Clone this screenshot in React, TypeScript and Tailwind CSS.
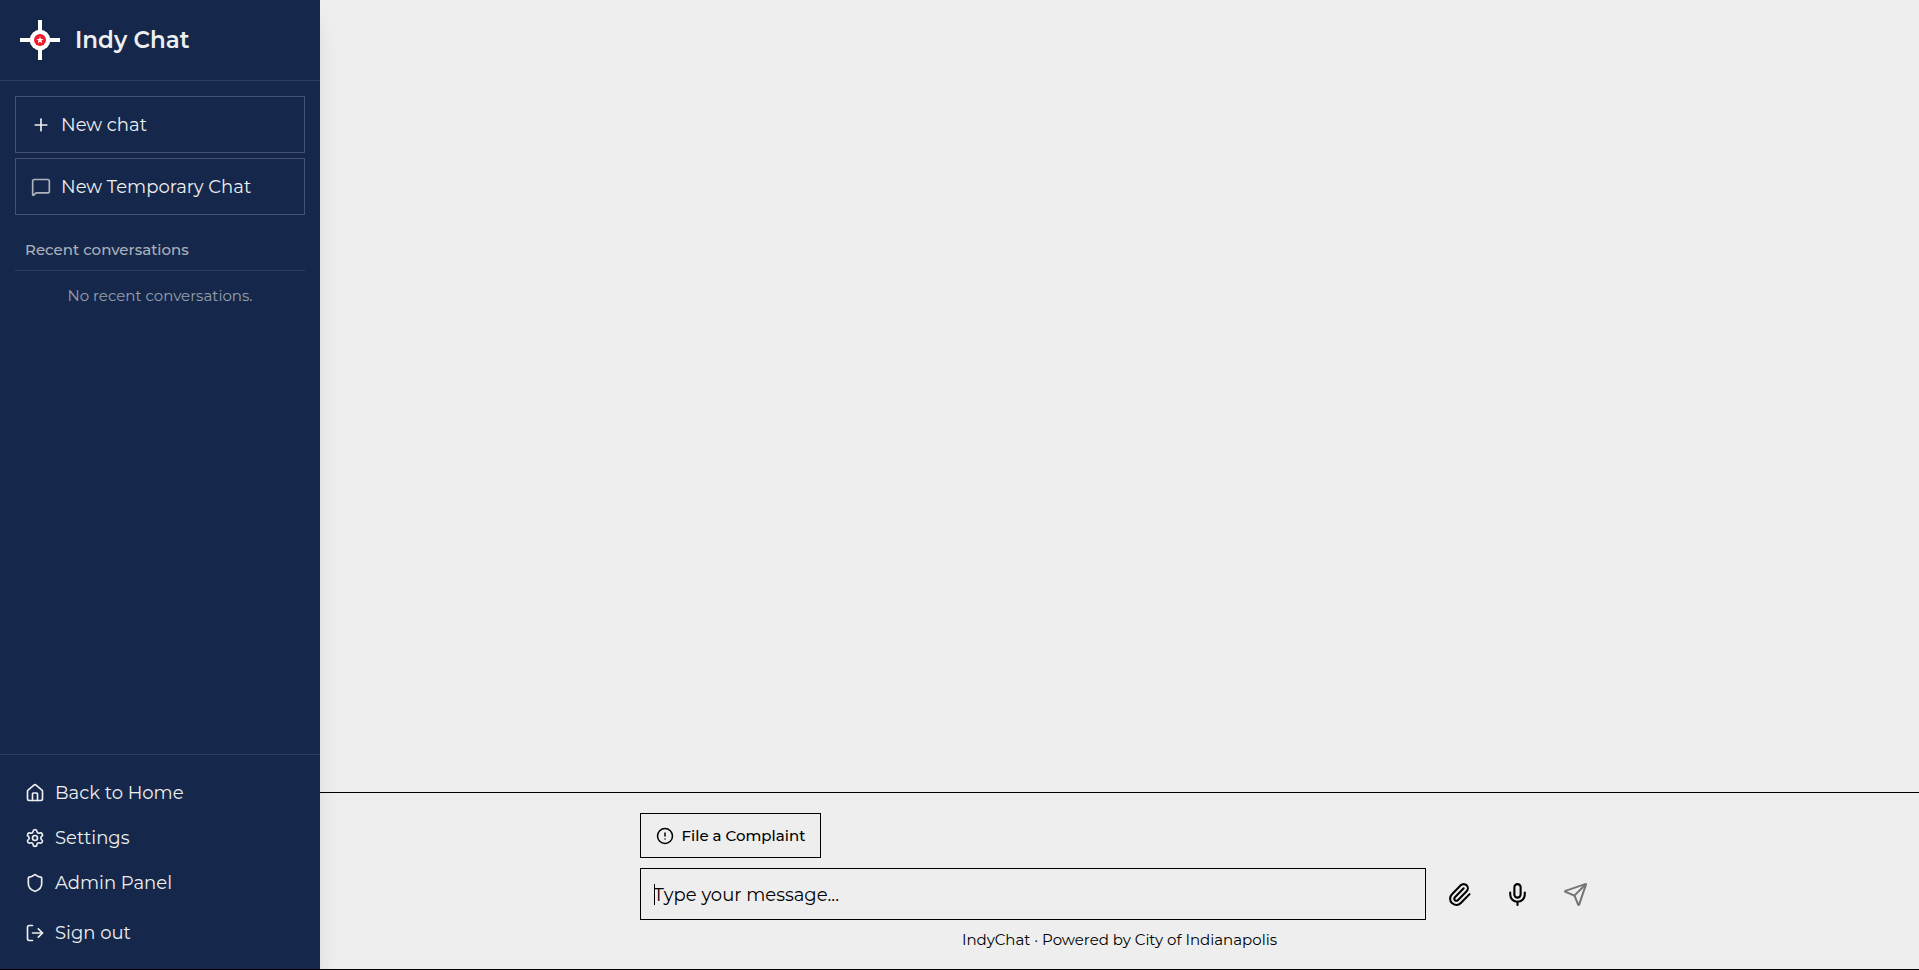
import { useState } from "react";
import {
  CircleAlert,
  House,
  LogOut,
  MessageSquare,
  Mic,
  Paperclip,
  Plus,
  Send,
  Settings,
  Shield,
} from "lucide-react";

const navItems = [
  { key: "home", label: "Back to Home", icon: House },
  { key: "settings", label: "Settings", icon: Settings },
  { key: "admin", label: "Admin Panel", icon: Shield },
];

function Logo() {
  return (
    <svg viewBox="0 0 40 40" className="h-10 w-10 shrink-0" aria-hidden="true">
      <path d="M18 0h4v40h-4z M0 18h40v4H0z" fill="#fff" />
      <circle cx="20" cy="20" r="10.3" fill="#fff" />
      <circle cx="20" cy="20" r="6" fill="#ee1c2e" />
      <path
        d="M20 16.4l.9 2.5 2.6.1-2 1.6.7 2.6-2.2-1.5-2.2 1.5.7-2.6-2-1.6 2.6-.1z"
        fill="#fff"
      />
    </svg>
  );
}

function Sidebar() {
  return (
    <aside className="flex w-80 shrink-0 flex-col bg-[#15284b] text-[#eeeeee] shadow-xl">
      <div className="flex items-center gap-[15px] border-b border-white/10 p-5">
        <Logo />
        <h1 className="text-[23px] leading-10 font-semibold">Indy Chat</h1>
      </div>

      <div className="flex flex-1 flex-col px-[15px] pt-[15px]">
        <div className="flex flex-col gap-[5px]">
          <button className="flex h-[57px] items-center gap-[10px] border border-white/20 px-[15px] text-[18px] leading-7">
            <Plus className="h-5 w-5" />
            <span>New chat</span>
          </button>
          <button className="flex h-[57px] items-center gap-[10px] border border-white/20 px-[15px] text-[18px] leading-7">
            <MessageSquare className="h-5 w-5 opacity-70" />
            <span>New Temporary Chat</span>
          </button>
        </div>

        <h2 className="mt-5 border-b border-white/10 px-[10px] pt-[5px] pb-[10px] text-[15px] leading-5 font-medium text-[#eeeeee]/70">
          Recent conversations
        </h2>
        <p className="mt-[15px] text-center text-[15px] leading-5 text-[#eeeeee]/60">
          No recent conversations.
        </p>
      </div>

      <nav className="flex flex-col border-t border-white/10 px-[15px] pt-[15px] pb-[14px] text-[18px] leading-7">
        {navItems.map(({ key, label, icon: Icon }) => (
          <a key={key} href={`#${key}`} className="flex h-[45px] items-center gap-[10px] px-[10px]">
            <Icon className="h-5 w-5" />
            <span>{label}</span>
          </a>
        ))}
        <button className="mt-[5px] flex h-[45px] items-center gap-[10px] px-[10px]">
          <LogOut className="h-5 w-5" />
          <span>Sign out</span>
        </button>
      </nav>
    </aside>
  );
}

function Composer() {
  const [message, setMessage] = useState("");

  return (
    <footer className="border-t border-black pt-5">
      <div className="mx-auto w-full max-w-[960px]">
        <button className="flex h-[45px] items-center gap-2 border border-black px-[15px] text-[15px] leading-6 font-medium">
          <CircleAlert className="h-[18px] w-[18px]" />
          File a Complaint
        </button>

        <div className="mt-[10px] flex items-center gap-[10px]">
          <div className="relative flex flex-1">
            <input
              type="text"
              aria-label="Message"
              placeholder="Type your message..."
              value={message}
              onChange={(e) => setMessage(e.target.value)}
              className="h-[52px] w-full border border-black bg-transparent px-[13px] pt-px text-[18px] leading-7 text-black outline-none placeholder:text-black"
            />
            {message === "" && (
              <span className="pointer-events-none absolute top-4 left-[14px] h-[21px] w-px bg-black" />
            )}
          </div>
          <button aria-label="Attach file" className="flex h-12 w-12 items-center justify-center">
            <Paperclip className="h-[25px] w-[25px]" />
          </button>
          <button aria-label="Voice input" className="flex h-12 w-12 items-center justify-center">
            <Mic className="h-[25px] w-[25px]" />
          </button>
          <button
            aria-label="Send"
            disabled={message === ""}
            className="flex h-12 w-12 items-center justify-center disabled:opacity-50"
          >
            <Send className="h-[25px] w-[25px]" />
          </button>
        </div>

        <p className="mt-[10px] pb-[19px] text-center text-[15px] leading-5">
          IndyChat · Powered by City of Indianapolis
        </p>
      </div>
    </footer>
  );
}

export default function App() {
  return (
    <div className="flex h-screen border-b border-black bg-[#eeeeee] font-[Montserrat,Inter,sans-serif] text-black">
      <Sidebar />
      <main className="flex min-w-0 flex-1 flex-col">
        <section className="flex-1" aria-label="Conversation" />
        <Composer />
      </main>
    </div>
  );
}
